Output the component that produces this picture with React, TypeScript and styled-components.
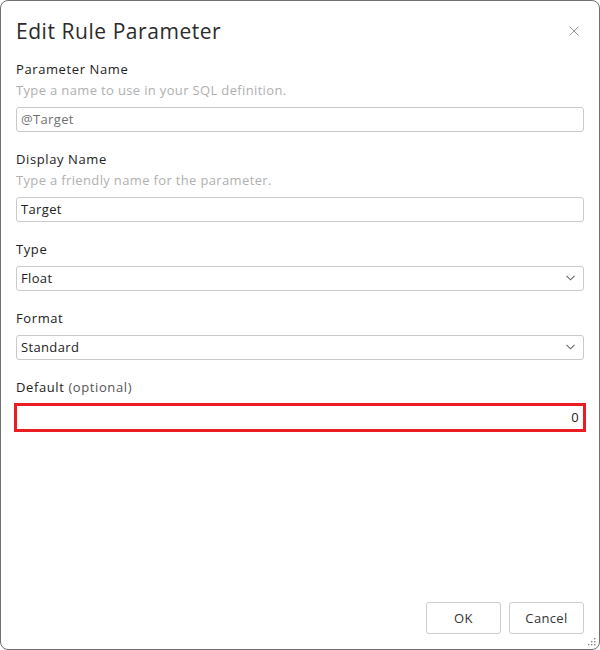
import React from 'react';
import styled, { createGlobalStyle } from 'styled-components';

const GlobalStyle = createGlobalStyle`
    html, body {
        margin: 0;
        padding: 0;
        background: #ffffff;
    }
    body {
        font-family: "Open Sans", "Liberation Sans", sans-serif;
        color: #333333;
        letter-spacing: 0.35px;
    }
    * {
        box-sizing: border-box;
    }
`;

const Dialog = styled.div`
    width: 600px;
    height: 650px;
    border: 1px solid #707070;
    border-radius: 8px;
    background: #ffffff;
    display: flex;
    flex-direction: column;
    position: relative;
    overflow: hidden;
`;

const Header = styled.div`
    display: flex;
    align-items: center;
    justify-content: space-between;
    height: 30px;
    margin: 15px 15px 13px 15px;
`;

const Title = styled.h1`
    margin: 0;
    font-size: 21px;
    font-weight: 400;
    color: #2b2b2b;
    line-height: 30px;
    letter-spacing: 0.55px;
`;

const CloseButton = styled.button`
    border: 0;
    background: none;
    padding: 0;
    width: 12px;
    height: 12px;
    margin-right: 4px;
    display: flex;
    align-items: center;
    justify-content: center;
    cursor: pointer;
`;

const Body = styled.div`
    flex: 1;
    padding: 0 15px;
    display: flex;
    flex-direction: column;
`;

const Field = styled.div`
    display: flex;
    flex-direction: column;
    margin-bottom: 17px;
`;

const Label = styled.label<{ $withHint?: boolean }>`
    font-size: 13px;
    line-height: 20px;
    color: #222222;
    letter-spacing: 0.6px;
    margin-bottom: ${p => (p.$withHint ? '1px' : '7px')};

    span {
        color: #555555;
    }
`;

const Hint = styled.div`
    font-size: 13px;
    line-height: 20px;
    color: #b0b0b0;
    margin-bottom: 7px;
`;

const TextInput = styled.input<{ $invalid?: boolean; $muted?: boolean }>`
    font-family: inherit;
    font-size: 13px;
    letter-spacing: 0.35px;
    height: ${p => (p.$invalid ? '29px' : '25px')};
    margin: ${p => (p.$invalid ? '-1px -2px 0 -2px' : '0')};
    border: ${p => (p.$invalid ? '3px solid #ec1c24' : '1px solid #cacaca')};
    border-radius: ${p => (p.$invalid ? '0' : '3px')};
    padding: 0 4px 1px 4px;
    color: ${p => (p.$muted ? '#707070' : '#222222')};
    text-align: ${p => (p.$invalid ? 'right' : 'left')};
    background: #ffffff;
    outline: none;
`;

const SelectBox = styled.div`
    height: 25px;
    border: 1px solid #cacaca;
    border-radius: 3px;
    padding: 0 8px 1px 4px;
    font-size: 13px;
    color: #222222;
    display: flex;
    align-items: center;
    justify-content: space-between;
`;

const Footer = styled.div`
    display: flex;
    justify-content: flex-end;
    gap: 8px;
    padding: 0 15px 15px 15px;
`;

const Button = styled.button`
    width: 75px;
    height: 32px;
    font-family: inherit;
    font-size: 13px;
    letter-spacing: 0.35px;
    color: #333333;
    background: #ffffff;
    border: 1px solid #cccccc;
    border-radius: 3px;
    cursor: pointer;
`;

const Grip = styled.div`
    position: absolute;
    right: 3px;
    bottom: 3px;
    width: 9px;
    height: 9px;
    display: flex;
`;

function Chevron() {
    return (
        <svg width="9" height="6" viewBox="0 0 9 6">
            <path d="M0.5 0.8 L4.5 4.8 L8.5 0.8" fill="none" stroke="#666" strokeWidth="1.1" />
        </svg>
    );
}

function Select({ value }: { value: string }) {
    return (
        <SelectBox>
            {value}
            <Chevron />
        </SelectBox>
    );
}

export default function App() {
    return (
        <>
            <GlobalStyle />
            <Dialog>
                <Header>
                    <Title>Edit Rule Parameter</Title>
                    <CloseButton aria-label="close">
                        <svg width="10" height="10" viewBox="0 0 10 10">
                            <path d="M0.5 0.5 L9.5 9.5 M9.5 0.5 L0.5 9.5" stroke="#9a9a9a" strokeWidth="1" />
                        </svg>
                    </CloseButton>
                </Header>

                <Body>
                    <Field>
                        <Label $withHint>Parameter Name</Label>
                        <Hint>Type a name to use in your SQL definition.</Hint>
                        <TextInput $muted readOnly value="@Target" />
                    </Field>

                    <Field>
                        <Label $withHint>Display Name</Label>
                        <Hint>Type a friendly name for the parameter.</Hint>
                        <TextInput readOnly value="Target" />
                    </Field>

                    <Field>
                        <Label>Type</Label>
                        <Select value="Float" />
                    </Field>

                    <Field>
                        <Label>Format</Label>
                        <Select value="Standard" />
                    </Field>

                    <Field>
                        <Label>Default <span>(optional)</span></Label>
                        <TextInput $invalid readOnly value="0" />
                    </Field>
                </Body>

                <Footer>
                    <Button>OK</Button>
                    <Button>Cancel</Button>
                </Footer>

                <Grip>
                    <svg width="9" height="9" viewBox="0 0 9 9">
                        <rect x="7" y="1" width="1.4" height="1.4" fill="#888" />
                        <rect x="4" y="4" width="1.4" height="1.4" fill="#888" />
                        <rect x="7" y="4" width="1.4" height="1.4" fill="#888" />
                        <rect x="1" y="7" width="1.4" height="1.4" fill="#888" />
                        <rect x="4" y="7" width="1.4" height="1.4" fill="#888" />
                        <rect x="7" y="7" width="1.4" height="1.4" fill="#888" />
                    </svg>
                </Grip>
            </Dialog>
        </>
    );
}
